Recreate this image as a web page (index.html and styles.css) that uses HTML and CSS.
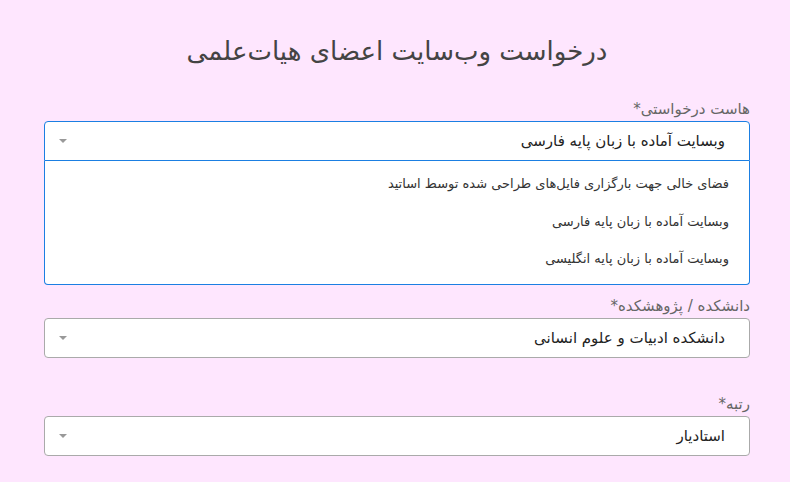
FILE: index.html
```html
<!DOCTYPE html>
<html lang="fa" dir="rtl">
<head>
    <meta charset="utf-8">
    <title>درخواست وب‌سایت اعضای هیات‌علمی</title>
    <link rel="stylesheet" href="styles.css">
</head>
<body>
    <div class="form">
        <h1 class="title">درخواست وب‌سایت اعضای هیات‌علمی</h1>

        <div class="field">
            <label class="label">هاست درخواستی*</label>
            <div class="select open">
                <span class="value">وبسایت آماده با زبان پایه فارسی</span>
                <span class="arrow"></span>
            </div>
            <ul class="options">
                <li>فضای خالی جهت بارگزاری فایل‌های طراحی شده توسط اساتید</li>
                <li>وبسایت آماده با زبان پایه فارسی</li>
                <li>وبسایت آماده با زبان پایه انگلیسی</li>
            </ul>
        </div>

        <div class="field f2">
            <label class="label">دانشکده / پژوهشکده*</label>
            <div class="select">
                <span class="value">دانشکده ادبیات و علوم انسانی</span>
                <span class="arrow"></span>
            </div>
        </div>

        <div class="field f3">
            <label class="label">رتبه*</label>
            <div class="select">
                <span class="value">استادیار</span>
                <span class="arrow"></span>
            </div>
        </div>
    </div>
</body>
</html>
```

FILE: styles.css
```css
body { margin: 0; background: #fee6fe; font-family: "DejaVu Sans", sans-serif; color: #333; }
.form { padding: 0 40px 0 44px; }
.title { margin: 0; padding-top: 36px; height: 61px; line-height: 30px; text-align: center; font-weight: normal; font-size: 26px; color: #444; }

.field { display: flex; flex-direction: column; }
.label { font-size: 15px; color: #666; height: 24px; line-height: 24px; }
.select { height: 38px; border: 1px solid #aaa; border-radius: 4px; background: white; display: flex; align-items: center; justify-content: space-between; padding: 0 24px 0 14px; }
.select.open { border-color: #1b7fe2; border-radius: 4px 4px 0 0; }
.value { font-size: 15px; color: #222; }
.arrow { width: 0; height: 0; border-left: 4px solid transparent; border-right: 4px solid transparent; border-top: 4px solid #999; }

.options { list-style: none; margin: 0; padding: 4px 0 5px; border: 1px solid #1b7fe2; border-top: none; border-radius: 0 0 4px 4px; background: white; }
.options li { height: 38px; line-height: 38px; padding-right: 20px; font-size: 13px; color: #333; }
.options li:last-child { line-height: 36px; }

.f2 { margin-top: 9px; }
.f3 { margin-top: 34px; }
```
